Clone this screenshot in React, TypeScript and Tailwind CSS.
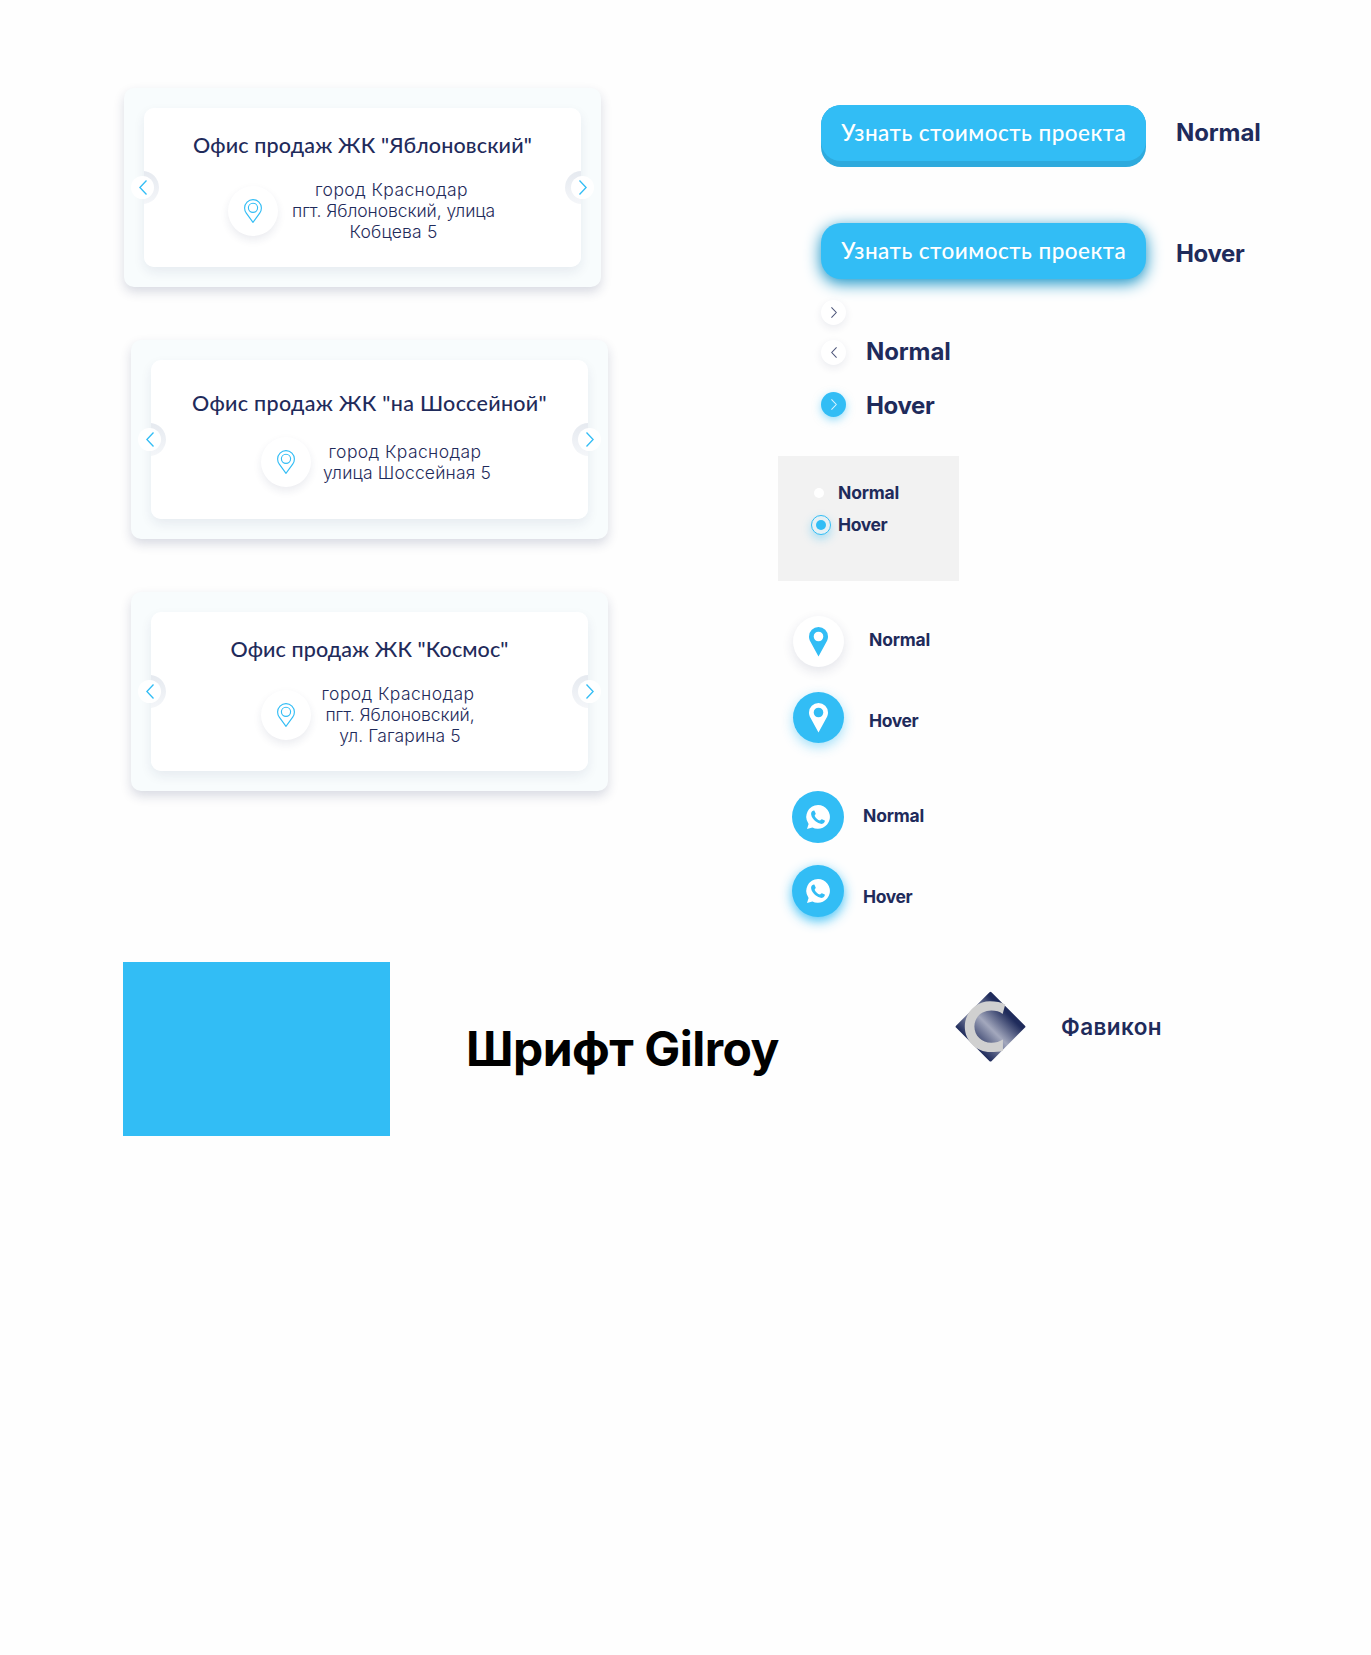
import React, { type ReactNode } from "react";

const BIG = "block whitespace-nowrap text-[24px] leading-[30px] font-bold";
const SMALL = "block whitespace-nowrap text-[17.5px] leading-[22px] font-bold";
const BUTTON_TEXT =
  "block whitespace-nowrap pl-[0.5px] font-['Lato',sans-serif] text-[22.5px] leading-6 font-medium tracking-[0.47px]";

function BigLabel({ children }: { children: "Normal" | "Hover" }) {
  return <span className={`${BIG} ${children === "Normal" ? "tracking-[-0.12px]" : "tracking-[-0.38px]"}`}>{children}</span>;
}

function SmallLabel({ children }: { children: "Normal" | "Hover" }) {
  return <span className={`${SMALL} ${children === "Normal" ? "tracking-[-0.18px]" : "tracking-[-0.4px]"}`}>{children}</span>;
}

function Chevron({ flip, className }: { flip?: boolean; className: string }) {
  return (
    <svg viewBox="0 0 8 15" className={className} fill="none" stroke="currentColor">
      <path d={flip ? "M7.5 .5L.9 7.5L7.5 14.5" : "M.5 .5L7.1 7.5L.5 14.5"} />
    </svg>
  );
}

function PinOutline() {
  return (
    <svg viewBox="0 0 18 24" className="h-6 w-[18px]" fill="none" stroke="#32bdf5" strokeWidth="1.150">
      <path d="M9 23.3L2.3 14.2C1.1 12.5.6 11 .6 9A8.4 8.4 0 0 1 17.4 9C17.4 11 16.9 12.5 15.7 14.2Z" />
      <circle cx="9" cy="8.8" r="4.6" />
    </svg>
  );
}

function PinSolid() {
  return (
    <svg viewBox="0 0 19 29.5" className="h-[29.5px] w-[19px]" fill="currentColor">
      <path
        fillRule="evenodd"
        d="M9.5 29.5L1.6 15C.5 13.2 0 11.5 0 9.5A9.5 9.5 0 0 1 19 9.5C19 11.5 18.5 13.2 17.4 15ZM9.5 4.7A4.8 4.8 0 1 0 9.5 14.3A4.8 4.8 0 1 0 9.5 4.7Z"
      />
    </svg>
  );
}

function WhatsApp() {
  return (
    <svg viewBox="0 0 24 24" className="h-6 w-6">
      <path fill="#fff" d="M12.1 0A11.9 11.9 0 1 1 6.4 22.4L1 24L2.6 18.9A11.9 11.9 0 0 1 12.1 0Z" />
      <path
        fill="#32bdf5"
        d="M5.4 7.2C6.2 5.9 7.6 5 8.3 5.6L9.7 8.6C9.9 9.2 8.9 10.2 8.6 10.7C9.8 13.2 11.6 14.8 14 15.6C14.6 15 15.3 14 15.9 14.2L18.8 15.6C19.3 16.3 18 18.4 16.4 18.8C12.5 19.6 5.9 14.5 5.2 9.8C5 8.9 5 8 5.4 7.2Z"
      />
    </svg>
  );
}

function Favicon() {
  return (
    <svg viewBox="75 62 213 214" className="mt-[29px] h-[71px] w-[71px] shrink-0">
      <defs>
        <linearGradient id="fav" gradientUnits="userSpaceOnUse" x1="181" y1="245" x2="181" y2="94">
          <stop offset="0" stopColor="#1f2b5b" />
          <stop offset=".48" stopColor="#a3a8bd" />
          <stop offset=".92" stopColor="#1f2b5b" />
          <stop offset="1" stopColor="#1f2b5b" />
        </linearGradient>
      </defs>
      <rect x="106" y="94" width="151" height="151" rx="4" transform="rotate(45 181.500 169.500)" fill="url(#fav)" />
      <path
        fill="#d0d0d0"
        d="M226 103C214 96 198 93 180 93C138 93 104 127 104 169C104 212 138 246 182 246C196 246 208 245 219 242L219 208C210 214 197 218 184 218C155 218 133 197 133 169C133 141 155 121 184 121C198 121 209 124 218 131Z"
      />
    </svg>
  );
}

interface CardProps {
  className?: string;
  title: string;
  titleClass: string;
  pinClass: string;
  children: ReactNode;
}

function Card({ className = "", title, titleClass, pinClass, children }: CardProps) {
  return (
    <article className={`relative h-[199px] w-[477px] rounded-[10px] bg-[#f8fcfd] px-5 pt-5 shadow-[0_5px_11px_rgba(31,43,91,0.17)] ${className}`}>
      <div className="h-[159px] rounded-[10px] shadow-[0_5px_12px_rgba(31,43,91,0.08)]">
        <div className="relative h-full overflow-hidden rounded-[10px] bg-white">
          <span className="absolute top-[62.500px] -left-[18px] size-[33px] rounded-full bg-linear-to-b from-[#e6eaf0] to-[#f4f6f9]" />
          <span className="absolute top-[62.500px] -right-[17px] size-[33px] rounded-full bg-linear-to-b from-[#e6eaf0] to-[#f4f6f9]" />
          <h2 className={`text-center font-['Lato',sans-serif] text-[21.5px] leading-6 font-medium whitespace-nowrap ${titleClass}`}>{title}</h2>
          <div className="flex items-start">
            <span className={`flex size-[50px] items-center justify-center rounded-full bg-white shadow-[0_4px_9px_rgba(31,43,91,0.09)] ${pinClass}`}>
              <PinOutline />
            </span>
            {children}
          </div>
        </div>
      </div>
      <button className="absolute top-[87.500px] left-[7px] flex size-[23px] items-center justify-center rounded-full bg-white text-[#32bdf5]">
        <Chevron flip className="h-[15px] w-2 stroke-[1.3]" />
      </button>
      <button className="absolute top-[87.500px] right-[7px] flex size-[23px] items-center justify-center rounded-full bg-white text-[#32bdf5]">
        <Chevron className="h-[15px] w-2 stroke-[1.3]" />
      </button>
    </article>
  );
}

const ADDRESS = "flex flex-col items-center text-[17.5px] leading-[21px] font-light whitespace-nowrap";

export default function App() {
  return (
    <main className="h-[1655px] w-[1371px] overflow-hidden bg-[#fefefe] font-['Inter',sans-serif] text-[#1f2b5b]">
      <div className="flex h-[962px] items-start">
        <section className="flex w-[778px] flex-col gap-[53px] pt-[88px] pl-[131px]">
          <Card
            className="-ml-[7px]"
            title={'Офис продаж ЖК "Яблоновский"'}
            titleClass="pt-[25px] tracking-[0.153px]"
            pinClass="mt-[29px] ml-[84px]"
          >
            <p className={`mt-[22px] ml-[13px] w-[204px] ${ADDRESS}`}>
              <span className="pr-[3px] tracking-[0.393px]">город Краснодар</span>
              <span className="pl-px tracking-[-0.071px]">пгт. Яблоновский, улица</span>
              <span className="pl-px tracking-[0.174px]">Кобцева 5</span>
            </p>
          </Card>
          <Card
            title={'Офис продаж ЖК "на Шоссейной"'}
            titleClass="pt-[31px] tracking-[0.307px]"
            pinClass="mt-[22px] ml-[110px]"
          >
            <p className={`mt-[26px] ml-[12px] w-[168px] ${ADDRESS}`}>
              <span className="pr-1 tracking-[0.393px]">город Краснодар</span>
              <span className="tracking-[0.164px]">улица Шоссейная 5</span>
            </p>
          </Card>
          <Card
            title={'Офис продаж ЖК "Космос"'}
            titleClass="pt-[25px] tracking-[0.09px]"
            pinClass="mt-[29px] ml-[110px]"
          >
            <p className={`mt-[22px] ml-[10.5px] w-[153px] ${ADDRESS}`}>
              <span className="tracking-[0.393px]">город Краснодар</span>
              <span className="pl-1 tracking-[-0.108px]">пгт. Яблоновский,</span>
              <span className="pl-1 tracking-[0.095px]">ул. Гагарина 5</span>
            </p>
          </Card>
        </section>

        <section className="flex flex-col pt-[105px]">
          <div className="flex items-start pl-[43px]">
            <button className="h-[62px] w-[325px] rounded-[20px] bg-[#2eaadd] pb-[6px]">
              <span className="flex h-[56px] justify-center rounded-[20px] bg-[#32bdf5] pt-4 text-white">
                <span className={BUTTON_TEXT}>Узнать стоимость проекта</span>
              </span>
            </button>
            <div className="mt-[13px] ml-[30px]"><BigLabel>Normal</BigLabel></div>
          </div>
          <div className="mt-[56px] flex items-start pl-[43px]">
            <button className="flex h-[56px] w-[325px] justify-center rounded-[20px] bg-[#32bdf5] pt-4 text-white shadow-[0_4px_16px_#0c8fc4]">
              <span className={BUTTON_TEXT}>Узнать стоимость проекта</span>
            </button>
            <div className="mt-[16px] -mb-[6px] ml-[30px]"><BigLabel>Hover</BigLabel></div>
          </div>

          <div className="mt-[21px] pl-[43px]">
            <button className="flex size-[25px] items-center justify-center rounded-full bg-white text-[#4c5579] shadow-[0_3px_8px_rgba(31,43,91,0.09)]">
              <Chevron className="h-[11px] w-[6px] stroke-[1.4]" />
            </button>
          </div>
          <div className="mt-[10px] flex h-[30px] items-start pl-[43px]">
            <button className="mt-[5px] flex size-[25px] items-center justify-center rounded-full bg-white text-[#4c5579] shadow-[0_3px_8px_rgba(31,43,91,0.09)]">
              <Chevron flip className="h-[11px] w-[6px] stroke-[1.4]" />
            </button>
            <div className="mt-[2px] ml-[20px]"><BigLabel>Normal</BigLabel></div>
          </div>
          <div className="mt-[24px] flex h-[30px] items-start pl-[43px]">
            <button className="mt-[3px] flex size-[25px] items-center justify-center rounded-full bg-[#32bdf5] text-[#d8f3fe] shadow-[0_3px_9px_rgba(50,189,245,0.5)]">
              <Chevron className="h-[11px] w-[6px] stroke-[1.4]" />
            </button>
            <div className="mt-[2px] ml-[20px]"><BigLabel>Hover</BigLabel></div>
          </div>

          <div className="mt-[37px] flex h-[125px] w-[181px] flex-col gap-[10px] bg-[#f2f2f2] pt-[26px]">
            <div className="flex h-[22px] items-start pl-9">
              <span className="mt-[6px] size-[10px] rounded-full bg-white" />
              <div className="ml-[14px]"><SmallLabel>Normal</SmallLabel></div>
            </div>
            <div className="flex h-[22px] items-start pl-[33px]">
              <span className="mt-px flex size-5 items-center justify-center rounded-full border border-[#32bdf5] bg-[#e6f1f5] shadow-[0_4px_10px_rgba(50,189,245,0.4)]">
                <span className="size-[10px] rounded-full bg-[#32bdf5]" />
              </span>
              <div className="ml-[7px]"><SmallLabel>Hover</SmallLabel></div>
            </div>
          </div>

          <div className="mt-[35px] flex items-start pl-[15px]">
            <button className="flex size-[51px] justify-center rounded-full bg-white pt-[11px] text-[#32bdf5] shadow-[0_4px_12px_rgba(31,43,91,0.12)]">
              <PinSolid />
            </button>
            <div className="mt-[13px] ml-[25px]"><SmallLabel>Normal</SmallLabel></div>
          </div>
          <div className="mt-[25px] flex items-start pl-[15px]">
            <button className="flex size-[51px] justify-center rounded-full bg-[#32bdf5] pt-[11px] text-white shadow-[0_4px_12px_rgba(50,189,245,0.45)]">
              <PinSolid />
            </button>
            <div className="mt-[18px] ml-[25px]"><SmallLabel>Hover</SmallLabel></div>
          </div>

          <div className="mt-[48px] flex items-start pl-[14px]">
            <button className="flex size-[52px] items-center justify-center rounded-full bg-[#32bdf5]">
              <WhatsApp />
            </button>
            <div className="mt-[14px] ml-[19px]"><SmallLabel>Normal</SmallLabel></div>
          </div>
          <div className="mt-[22px] flex items-start pl-[14px]">
            <button className="flex size-[52px] items-center justify-center rounded-full bg-[#32bdf5] shadow-[0_4px_12px_rgba(50,189,245,0.9)]">
              <WhatsApp />
            </button>
            <div className="mt-[21px] ml-[19px]"><SmallLabel>Hover</SmallLabel></div>
          </div>
        </section>
      </div>

      <section className="flex items-start pl-[123px]">
        <div className="h-[174px] w-[267px] shrink-0 bg-[#32bdf5]" />
        <h1 className="mt-[57px] ml-[76px] w-[489px] shrink-0 text-[48px] leading-[60px] font-bold tracking-[-0.51px] whitespace-nowrap text-black">
          Шрифт Gilroy
        </h1>
        <Favicon />
        <p className="mt-[51px] ml-[35px] text-[22.5px] leading-7 font-semibold tracking-[0.4px] whitespace-nowrap">Фавикон</p>
      </section>
    </main>
  );
}
